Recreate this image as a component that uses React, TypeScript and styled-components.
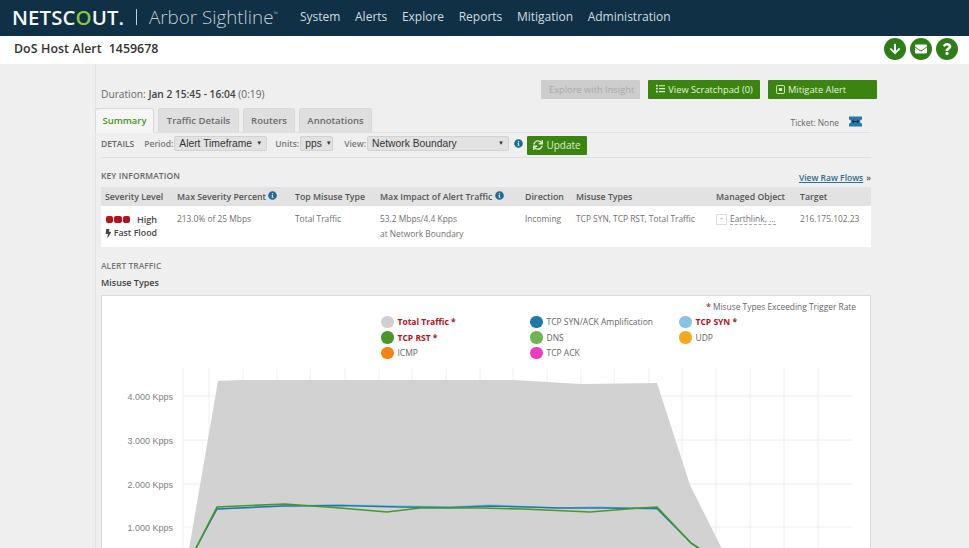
import React from "react";
import styled, { createGlobalStyle } from "styled-components";
import {
  FaArrowDown,
  FaBolt,
  FaEnvelope,
  FaInfoCircle,
  FaList,
  FaQuestion,
  FaSync,
} from "react-icons/fa";

const GlobalStyle = createGlobalStyle`
  html, body {
    margin: 0;
    height: 548px;
    overflow: hidden;
    background: #efefef;
    font-family: "Open Sans", "Liberation Sans", sans-serif;
    color: #555;
  }
`;

const NavBar = styled.header`
  height: 36px;
  background: #0f3045;
  display: flex;
  align-items: center;
  padding: 0 0 3px 12px;
  box-sizing: border-box;
`;

const Logo = styled.span`
  font-size: 20.4px;
  font-weight: 600;
  color: #f4f7f8;
  letter-spacing: 0.1px;
  width: 124px;
  white-space: nowrap;
  b {
    font-weight: 600;
    color: #8dc63f;
  }
`;

const Divider = styled.span`
  width: 1px;
  height: 16px;
  background: #c5ced3;
`;

const Product = styled.span`
  font-size: 18.8px;
  font-weight: 300;
  color: #c3cdd3;
  margin-left: 12px;
  width: 151px;
  white-space: nowrap;
  sup {
    font-size: 6px;
    vertical-align: 8px;
  }
`;

const NavMenu = styled.nav`
  display: flex;
  gap: 14.6px;
`;

const NavItem = styled.a`
  font-size: 12px;
  color: #d4dce0;
`;

const TitleBar = styled.div`
  height: 28px;
  background: #fff;
  display: flex;
  align-items: center;
  justify-content: space-between;
  padding: 0 11px 3px 14px;
  box-sizing: border-box;
`;

const PageTitle = styled.h1`
  margin: 0;
  font-size: 12.4px;
  font-weight: 600;
  color: #333;
  word-spacing: 0.4px;
`;

const RoundButtons = styled.div`
  display: flex;
  gap: 4px;
`;

const RoundButton = styled.span`
  width: 22px;
  height: 22px;
  border-radius: 50%;
  background: #2f7d18;
  color: #fff;
  display: flex;
  align-items: center;
  justify-content: center;
  font-size: 12px;
`;

const Main = styled.main`
  margin-left: 95px;
  width: 776px;
  padding-left: 5px;
  box-sizing: border-box;
  border-left: 1px solid #e2e2e2;
  height: 484px;
`;

const TopRow = styled.div`
  display: flex;
  align-items: center;
  height: 44px;
  padding-top: 6px;
  box-sizing: border-box;
`;

const Duration = styled.div`
  font-size: 10.2px;
  color: #666;
  margin-top: 10px;
  b {
    color: #444;
    font-weight: 600;
  }
`;

const Actions = styled.div`
  margin-left: auto;
  margin-right: -6px;
  display: flex;
  gap: 8px;
`;

const ActionButton = styled.span<{ $w: number; $off?: boolean }>`
  width: ${(p) => p.$w}px;
  height: 19px;
  box-sizing: border-box;
  padding-left: 8px;
  font-size: 9.3px;
  line-height: 19px;
  white-space: nowrap;
  display: flex;
  align-items: center;
  gap: 3px;
  background: ${(p) => (p.$off ? "#cdcdcd" : "#3c8410")};
  color: ${(p) => (p.$off ? "#a9a9a9" : "#e6f1df")};
  border-radius: 1px;
`;

const MitigateIcon = styled.svg`
  width: 9px;
  height: 9px;
`;

const TabRow = styled.div`
  height: 24px;
  display: flex;
  gap: 4px;
  margin-left: -6px;
  align-items: flex-end;
  position: relative;
`;

const Tab = styled.span<{ $w: number; $active?: boolean }>`
  width: ${(p) => p.$w}px;
  height: ${(p) => (p.$active ? 25 : 24)}px;
  box-sizing: border-box;
  text-align: center;
  font-size: 9.5px;
  font-weight: 600;
  line-height: 24px;
  border-radius: 3px 3px 0 0;
  border: 1px solid #d8d8d8;
  border-bottom: none;
  background: ${(p) => (p.$active ? "#f6f6f6" : "#dfdfdf")};
  color: ${(p) => (p.$active ? "#4a9422" : "#6b6b6b")};
  margin-bottom: ${(p) => (p.$active ? -1 : 0)}px;
  position: relative;
`;

const Ticket = styled.div`
  position: absolute;
  right: 8px;
  top: 6px;
  display: flex;
  align-items: center;
  gap: 9px;
  font-size: 8.4px;
  color: #666;
  span {
    margin-top: 3px;
  }
`;

const TicketIcon = styled.svg`
  width: 15px;
  height: 11px;
`;

const DetailsBar = styled.div`
  height: 26px;
  border-top: 1px solid #e0e0e0;
  border-bottom: 1px solid #dfdfdf;
  box-sizing: border-box;
  display: flex;
  align-items: center;
  padding-bottom: 3px;
  font-size: 8.5px;
  font-weight: 600;
  color: #777;
`;

const DetailsLabel = styled.span`
  margin-right: 10px;
  color: #666;
`;

const FieldLabel = styled.span`
  margin-right: 1px;
`;

const SelectBox = styled.span<{ $w: number; $mr?: number }>`
  width: ${(p) => p.$w}px;
  height: 15px;
  box-sizing: border-box;
  margin: 0 ${(p) => p.$mr ?? 8}px 0 0;
  padding: 0 4px;
  background: #e2e2e2;
  border: 1px solid #d2d2d2;
  border-radius: 2px;
  font-family: "Liberation Sans", sans-serif;
  font-size: 10.3px;
  font-weight: 400;
  line-height: 13px;
  color: #333;
  display: flex;
  align-items: center;
  justify-content: space-between;
  white-space: nowrap;
  &::after {
    content: "▼";
    font-size: 6px;
    margin-left: 4px;
  }
`;

const InfoIcon = styled(FaInfoCircle)`
  color: #1f6a94;
  font-size: 9px;
  flex: none;
`;

const ViewInfo = styled(InfoIcon)`
  margin-left: -3px;
`;

const UpdateButton = styled.span`
  margin: 3px 0 0 4px;
  width: 60px;
  height: 19px;
  background: #3c8410;
  color: #dcecd2;
  font-size: 10px;
  font-weight: 400;
  display: flex;
  align-items: center;
  justify-content: center;
  gap: 3px;
  border-radius: 1px;
`;

const SectionHead = styled.div`
  display: flex;
  justify-content: space-between;
  align-items: center;
  height: 29px;
`;

const SectionLabel = styled.span`
  font-size: 8.5px;
  font-weight: 600;
  color: #666;
  letter-spacing: 0.1px;
  margin-top: 6px;
`;

const RawLink = styled.span`
  font-size: 8.5px;
  font-weight: 600;
  color: #2b6d8f;
  text-decoration: underline;
  margin-top: 10px;
  span {
    color: #555;
    display: inline-block;
    margin-left: 3px;
  }
`;

const columns = "72px 118px 85px 145px 51px 140px 84px 75px";

const HeadRow = styled.div`
  display: grid;
  grid-template-columns: ${columns};
  height: 19px;
  align-items: center;
  padding-left: 4px;
  background: #e2e2e2;
  font-size: 8.75px;
  font-weight: 600;
  color: #555;
  white-space: nowrap;
`;

const BodyRow = styled.div`
  display: grid;
  grid-template-columns: ${columns};
  height: 41px;
  padding-left: 4px;
  background: #fff;
  font-size: 8.4px;
  color: #707070;
  white-space: nowrap;
`;

const Cell = styled.div`
  padding-top: 5px;
  line-height: 15px;
`;

const Severity = styled.div`
  display: flex;
  align-items: center;
  height: 14px;
  margin-top: 1px;
  font-weight: 600;
  font-size: 9px;
  color: #444;
`;

const Dot = styled.i`
  width: 7.3px;
  height: 7px;
  border-radius: 2px;
  background: #b3131b;
  margin-right: 1px;
  &:first-child {
    margin-left: 1px;
  }
  &:nth-child(3) {
    margin-right: 7px;
  }
`;

const Flood = styled.div`
  font-weight: 600;
  font-size: 8.8px;
  color: #444;
  display: flex;
  align-items: center;
  gap: 1px;
  margin-left: -1px;
`;

const ManagedLink = styled.span`
  display: flex;
  align-items: center;
  gap: 3px;
  height: 13px;
  margin-top: 2px;
  span:last-child {
    line-height: 10px;
    border-bottom: 1px dashed #aaa;
  }
`;

const ExpandBox = styled.span`
  width: 9px;
  height: 9px;
  box-sizing: content-box;
  border: 1px solid #ddd;
  color: #aaa;
  font-size: 6px;
  line-height: 9px;
  text-align: center;
`;

const AlertLabel = styled.div`
  font-size: 8.5px;
  font-weight: 600;
  color: #777;
  margin-top: 13px;
`;

const SubTitle = styled.div`
  font-size: 9px;
  font-weight: 600;
  color: #444;
  margin-top: 6px;
  line-height: 12px;
`;

const ChartPanel = styled.section`
  position: relative;
  margin-top: 6px;
  height: 260px;
  border: 1px solid #d9d9d9;
  border-bottom: none;
  background: #fff;
  width: 770px;
  box-sizing: border-box;
`;

const TriggerNote = styled.div`
  position: absolute;
  top: 5px;
  right: 14px;
  font-size: 8.4px;
  color: #666;
  em {
    color: #b3131b;
    font-style: normal;
    font-weight: 600;
  }
`;

const Legend = styled.div`
  display: grid;
  grid-template-columns: repeat(3, 149px);
  grid-auto-rows: 15.5px;
  padding: 18px 0 0 279px;
  height: 72px;
  box-sizing: border-box;
`;

const LegendItem = styled.div<{ $alert?: boolean }>`
  display: flex;
  align-items: center;
  gap: 4px;
  font-size: 8.5px;
  white-space: nowrap;
  font-weight: ${(p) => (p.$alert ? 700 : 400)};
  color: ${(p) => (p.$alert ? "#b3131b" : "#666")};
`;

const Swatch = styled.i<{ $c: string }>`
  width: 12.5px;
  height: 12.5px;
  border-radius: 50%;
  background: ${(p) => p.$c};
  flex: none;
`;

const ChartSvg = styled.svg`
  display: block;
  width: 768px;
  height: 187px;
`;

const legend = [
  { label: "Total Traffic *", color: "#cfcfcf", alert: true },
  { label: "TCP SYN/ACK Amplification", color: "#1f78a8" },
  { label: "TCP SYN *", color: "#8ac3e2", alert: true },
  { label: "TCP RST *", color: "#4b962a", alert: true },
  { label: "DNS", color: "#6fb551" },
  { label: "UDP", color: "#f7a823" },
  { label: "ICMP", color: "#f98012" },
  { label: "TCP ACK", color: "#ea3cc1" },
];

const navItems = ["System", "Alerts", "Explore", "Reports", "Mitigation", "Administration"];
const gridX = [183, 209, 243, 277, 310, 345, 379, 412, 446, 480, 513, 547, 581, 614, 649, 682, 716, 750, 784, 818];
const gridY = [
  { y: 396, label: "4.000 Kpps" },
  { y: 440, label: "3.000 Kpps" },
  { y: 484, label: "2.000 Kpps" },
  { y: 527, label: "1.000 Kpps" },
];

const App = () => {
  return (
    <>
      <GlobalStyle />
      <NavBar>
        <Logo>
          NETSC<b>O</b>UT.
        </Logo>
        <Divider />
        <Product>
          Arbor Sightline<sup>™</sup>
        </Product>
        <NavMenu>
          {navItems.map((item) => (
            <NavItem key={item}>{item}</NavItem>
          ))}
        </NavMenu>
      </NavBar>
      <TitleBar>
        <PageTitle>DoS Host Alert&nbsp; 1459678</PageTitle>
        <RoundButtons>
          <RoundButton>
            <FaArrowDown />
          </RoundButton>
          <RoundButton>
            <FaEnvelope />
          </RoundButton>
          <RoundButton>
            <FaQuestion />
          </RoundButton>
        </RoundButtons>
      </TitleBar>
      <Main>
        <TopRow>
          <Duration>
            Duration: <b>Jan 2 15:45 - 16:04</b> (0:19)
          </Duration>
          <Actions>
            <ActionButton $w={99} $off>
              Explore with Insight
            </ActionButton>
            <ActionButton $w={112}>
              <FaList /> View Scratchpad (0)
            </ActionButton>
            <ActionButton $w={109}>
              <MitigateIcon viewBox="0 0 10 10">
                <rect x="0.5" y="0.5" width="9" height="9" rx="1.5" fill="none" stroke="#e6f1df" />
                <rect x="3.2" y="3.5" width="3.6" height="3" fill="#e6f1df" />
              </MitigateIcon>
              Mitigate Alert
            </ActionButton>
          </Actions>
        </TopRow>
        <TabRow>
          <Tab $w={59} $active>
            Summary
          </Tab>
          <Tab $w={81}>Traffic Details</Tab>
          <Tab $w={52}>Routers</Tab>
          <Tab $w={73}>Annotations</Tab>
          <Ticket>
            <span>Ticket: None</span>
            <TicketIcon viewBox="0 0 15 11">
              <path d="M1 0.5h13v3a2 2 0 0 0 0 4v3H1v-3a2 2 0 0 0 0-4z" fill="#2b78a8" />
              <path d="M4 5.5h7M9 3.8l2 1.7-2 1.7M6 3.8L4 5.5l2 1.7" stroke="#0f3045" fill="none" />
            </TicketIcon>
          </Ticket>
        </TabRow>
        <DetailsBar>
          <DetailsLabel>DETAILS</DetailsLabel>
          <FieldLabel>Period:</FieldLabel>
          <SelectBox $w={93}>Alert Timeframe</SelectBox>
          <FieldLabel>Units:</FieldLabel>
          <SelectBox $w={33} $mr={11}>
            pps
          </SelectBox>
          <FieldLabel>View:</FieldLabel>
          <SelectBox $w={142}>Network Boundary</SelectBox>
          <ViewInfo />
          <UpdateButton>
            <FaSync /> Update
          </UpdateButton>
        </DetailsBar>
        <SectionHead>
          <SectionLabel>KEY INFORMATION</SectionLabel>
          <RawLink>
            View Raw Flows<span>»</span>
          </RawLink>
        </SectionHead>
        <HeadRow>
          <span>Severity Level</span>
          <span>
            Max Severity Percent <InfoIcon />
          </span>
          <span>Top Misuse Type</span>
          <span>
            Max Impact of Alert Traffic <InfoIcon />
          </span>
          <span>Direction</span>
          <span>Misuse Types</span>
          <span>Managed Object</span>
          <span>Target</span>
        </HeadRow>
        <BodyRow>
          <Cell>
            <Severity>
              <Dot />
              <Dot />
              <Dot />
              High
            </Severity>
            <Flood>
              <FaBolt /> Fast Flood
            </Flood>
          </Cell>
          <Cell>213.0% of 25 Mbps</Cell>
          <Cell>Total Traffic</Cell>
          <Cell>
            53.2 Mbps/4.4 Kpps
            <br />
            at Network Boundary
          </Cell>
          <Cell>Incoming</Cell>
          <Cell>TCP SYN, TCP RST, Total Traffic</Cell>
          <Cell>
            <ManagedLink>
              <ExpandBox>+</ExpandBox>
              <span>Earthlink, ...</span>
            </ManagedLink>
          </Cell>
          <Cell>216.175.102.23</Cell>
        </BodyRow>
        <AlertLabel>ALERT TRAFFIC</AlertLabel>
        <SubTitle>Misuse Types</SubTitle>
        <ChartPanel>
          <TriggerNote>
            <em>*</em> Misuse Types Exceeding Trigger Rate
          </TriggerNote>
          <Legend>
            {legend.map((l) => (
              <LegendItem key={l.label} $alert={l.alert}>
                <Swatch $c={l.color} />
                {l.label}
              </LegendItem>
            ))}
          </Legend>
          <ChartSvg viewBox="102 368 768 187">
            {gridX.map((x) => (
              <line key={x} x1={x} x2={x} y1={368} y2={555} stroke="#eeeeee" />
            ))}
            {gridY.map((g) => (
              <React.Fragment key={g.y}>
                <line x1={183} x2={852} y1={g.y} y2={g.y} stroke="#eeeeee" />
                <text x={173} y={g.y + 3.5} textAnchor="end" fontSize="9" fill="#808080" fontFamily="Liberation Sans, sans-serif">
                  {g.label}
                </text>
              </React.Fragment>
            ))}
            <polygon points="188,555 218,381 240,380 513,380 581,384 657,383 690,485 725,555" fill="#d2d2d2" />
            <polyline
              points="196,548 217,509 283,506 340,505 400,506 450,507 490,505 560,508 600,507 657,509 691,543 700,549"
              fill="none"
              stroke="#8ac3e2"
              strokeWidth="1.4"
            />
            <polyline
              points="196,548 217,509 283,506 340,505.5 400,507 450,507.5 490,506 560,508 600,508 657,508.5 691,543 700,549"
              fill="none"
              stroke="#1f78a8"
              strokeWidth="1.4"
            />
            <polyline
              points="196,548 217,507 285,504 340,508 387,512 420,508 480,508 523,509 590,512 640,508 657,507 691,543 700,549"
              fill="none"
              stroke="#4b962a"
              strokeWidth="1.6"
            />
          </ChartSvg>
        </ChartPanel>
      </Main>
    </>
  );
};

export default App;
